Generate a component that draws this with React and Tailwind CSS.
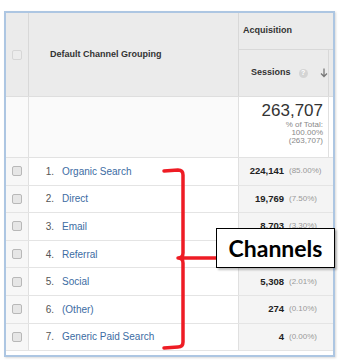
import React from 'react';

// row 4's value sits fully under the "Channels" label in the picture
const ROWS = [
  { n: 1, name: 'Organic Search', val: '224,141', pct: '(85.00%)' },
  { n: 2, name: 'Direct', val: '19,769', pct: '(7.50%)' },
  { n: 3, name: 'Email', val: '8,703', pct: '(3.30%)' },
  { n: 4, name: 'Referral', val: '', pct: '' },
  { n: 5, name: 'Social', val: '5,308', pct: '(2.01%)' },
  { n: 6, name: '(Other)', val: '274', pct: '(0.10%)' },
  { n: 7, name: 'Generic Paid Search', val: '4', pct: '(0.00%)' },
];

const Check = ({ light }) => (
  <div className={`w-[10px] h-[10px] rounded-[2px] border ${light ? 'border-[#d6d6d6] bg-[#ececec]' : 'border-[#b8b8b8] bg-[#e6e6e6]'}`} />
);

const App = () => {
  return (
    <div className="relative w-[340px] h-[364px] bg-white pt-[11px] pl-[4px] font-['Liberation_Sans',Arial,sans-serif]">
      {/* table frame */}
      <div className="w-[331px] border-2 border-[#adc6e2] shadow-[1px_1px_2px_rgba(0,0,0,0.15)] bg-white">
        {/* header */}
        <div className="flex h-[84px] bg-[#ebebeb] border-b border-[#dedede]">
          <div className="w-[23px] border-r border-[#d8d8d8] flex items-center justify-center">
            <Check light />
          </div>
          <div className="flex-1 flex items-center pl-[21px] text-[9px] font-bold text-[#333]">
            Default Channel Grouping
          </div>
          <div className="w-[95px] border-l border-[#d8d8d8] flex flex-col">
            <div className="h-[37px] flex items-center pl-[4px] text-[9px] font-bold text-[#333] border-b border-[#d8d8d8]">
              Acquisition
            </div>
            <div className="flex-1 flex">
              <div className="flex-1 flex items-center pl-[12px] text-[9px] font-bold text-[#333]">
                <span>Sessions</span>
                <span className="ml-[8px] w-[9px] h-[9px] rounded-full bg-[#d4d4d4] text-white text-[7px] flex items-center justify-center">?</span>
                <svg className="ml-[12px]" width="8" height="10" viewBox="0 0 8 10">
                  <path d="M4 0.5 V8.5 M1 5.5 L4 8.5 L7 5.5" fill="none" stroke="#777" strokeWidth="1.3" />
                </svg>
              </div>
              <div className="w-[5px] border-l border-[#d8d8d8]" />
            </div>
          </div>
        </div>

        {/* totals row */}
        <div className="flex h-[61px] border-b border-[#e2e2e2] bg-[#fafafa]">
          <div className="w-[23px] border-r border-[#e0e0e0]" />
          <div className="flex-1" />
          <div className="w-[95px] flex border-l border-[#e0e0e0] bg-white">
            <div className="flex-1 flex flex-col items-end pr-[5px] pt-[5px]">
              <div className="text-[17px] leading-[18px] text-[#333]">263,707</div>
              <div className="text-[8px] leading-[8px] text-[#888] text-right mt-[1px]">% of Total:</div>
              <div className="text-[8px] leading-[8px] text-[#888] text-right">100.00%</div>
              <div className="text-[8px] leading-[8px] text-[#888] text-right">(263,707)</div>
            </div>
            <div className="w-[5px] border-l border-[#e0e0e0]" />
          </div>
        </div>

        {/* data rows */}
        {ROWS.map((r) => (
          <div key={r.n} className="flex h-[27.6px] border-b border-[#e4e4e4]">
            <div className="w-[23px] border-r border-[#e0e0e0] bg-[#f7f7f7] flex items-center justify-center">
              <Check />
            </div>
            <div className="flex-1 flex items-center text-[10px]">
              <span className="w-[33px] text-right pr-[8px] text-[#555]">{r.n}.</span>
              <span className="text-[#3c6ca3]">{r.name}</span>
            </div>
            <div className="w-[95px] flex items-center justify-end pr-[10px] bg-[#f4f4f4] border-l border-[#e0e0e0]">
              {r.val && (
                <>
                  <span className="text-[9.5px] font-bold text-[#222]">{r.val}</span>
                  <span className="ml-[5px] w-[34px] text-[8px] text-[#999]">{r.pct}</span>
                </>
              )}
            </div>
          </div>
        ))}
        <div className="h-[4px]" />
      </div>

      {/* annotation: bracket */}
      <svg className="absolute left-0 top-0 pointer-events-none" width="340" height="364" viewBox="0 0 340 364">
        <path
          d="M164 171 L178 170 Q183 170 183 175 L183 253 Q183 258 178 258 Q183 258 183 263 L183 342 Q183 347 178 347 L164 348 M183 258 L217 258"
          fill="none"
          stroke="#ee1c24"
          strokeWidth="3.5"
          strokeLinejoin="round"
          strokeLinecap="round"
        />
      </svg>

      {/* annotation: label */}
      <div className="absolute left-[216px] top-[228px] w-[119px] h-[40px] bg-white border border-black shadow-[2px_2px_2px_rgba(0,0,0,0.25)] flex items-center justify-center">
        <span className="font-['Lato',sans-serif] font-bold text-[23px] text-black">Channels</span>
      </div>
    </div>
  );
};

export default App;
